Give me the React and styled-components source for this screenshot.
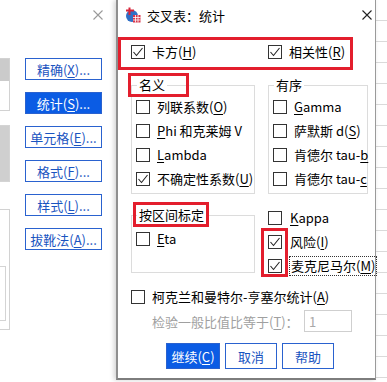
import React from "react";
import styled, { createGlobalStyle } from "styled-components";

const GlobalStyle = createGlobalStyle`
  html, body { margin: 0; padding: 0; background: #fff; }
  body {
    font-family: "Noto Sans CJK SC", "Microsoft YaHei", sans-serif;
    font-size: 13px;
    color: #000;
  }
  #root { width: 387px; height: 382px; overflow: hidden; }
`;

const Screen = styled.div`
  display: flex;
  width: 387px;
  height: 382px;
  overflow: hidden;
  background: #fff;
`;

/* ---------- background window ---------- */
const BackWindow = styled.div`
  width: 116px;
  flex-shrink: 0;
  display: flex;
  flex-direction: column;
  background: #fff;
`;

const BackTitle = styled.div`
  height: 30px;
  display: flex;
  align-items: center;
  justify-content: flex-end;
  padding-right: 13px;
`;

const BackBody = styled.div`
  display: flex;
  padding-top: 28px;
`;

const SideStrip = styled.div`
  width: 10px;
  display: flex;
  flex-direction: column;
`;

const SidePanel = styled.div`
  height: ${(p) => p.$h}px;
  margin-top: ${(p) => p.$mt || 0}px;
  border: 1px solid #d2d2d2;
  border-left: none;
  box-sizing: border-box;
  display: flex;
  flex-direction: column;
`;

const SideFill = styled.div`
  height: ${(p) => p.$h}px;
  margin-top: ${(p) => p.$mt || 0}px;
  width: ${(p) => p.$w || 9}px;
  background: ${(p) => p.$bg || "#cbcbcb"};
  border: ${(p) => (p.$outline ? "1px solid #d4d4d4" : "none")};
  border-left: none;
  box-sizing: border-box;
`;

const ButtonCol = styled.div`
  margin-left: 15px;
  display: flex;
  flex-direction: column;
  gap: 12px;
`;

const SideButton = styled.div`
  width: 77px;
  height: 22px;
  box-sizing: border-box;
  border: 1px solid #2a62cf;
  background: ${(p) => (p.$primary ? "#0b5ce4" : "#fff")};
  color: ${(p) => (p.$primary ? "#fff" : "#1a54bf")};
  display: flex;
  align-items: center;
  justify-content: center;
  font-size: 13px;
  line-height: 1;
  white-space: nowrap;
`;

/* ---------- dialog ---------- */
const Dialog = styled.div`
  position: relative;
  width: 260px;
  height: 380px;
  flex-shrink: 0;
  box-sizing: border-box;
  border-left: 2px solid #8e8e8e;
  border-right: 1px solid #9a9a9a;
  border-bottom: 2px solid #7d7d7d;
  background: #fff;
  box-shadow: -2px 0 5px rgba(0, 0, 0, 0.18);
  display: flex;
  flex-direction: column;
`;

const TitleBar = styled.div`
  height: 30px;
  display: flex;
  align-items: center;
  padding-left: 7px;
  padding-right: 3px;
`;

const TitleText = styled.span`
  margin-left: 6px;
  font-size: 13px;
  line-height: 1;
  flex: 1;
`;

const Content = styled.div`
  display: flex;
  flex-direction: column;
  padding: 6px 0 0 13px;
`;

const TwoCol = styled.div`
  display: grid;
  grid-template-columns: 124px 100px;
  column-gap: 13px;
  align-items: ${(p) => p.$align || "start"};
  margin-top: ${(p) => p.$mt || 0}px;
  height: ${(p) => (p.$h ? `${p.$h}px` : "auto")};
`;

const GroupBox = styled.div`
  border: 1px solid #dcdcdc;
  margin-top: 9px;
  padding: 0 0 ${(p) => p.$pb || 0}px 4px;
  display: flex;
  flex-direction: column;
`;

const Legend = styled.div`
  margin: -10px 0 ${(p) => p.$gap || 2}px 1px;
  padding: 0 2px;
  background: #fff;
  line-height: 17px;
  height: 17px;
  width: fit-content;
  white-space: nowrap;
`;

const Stack = styled.div`
  display: flex;
  flex-direction: column;
`;

const CheckRow = styled.div`
  display: flex;
  align-items: center;
  height: 24px;
  white-space: nowrap;
`;

const Box = styled.span`
  width: 14px;
  height: 14px;
  box-sizing: border-box;
  border: 1px solid #333;
  background: #fff;
  flex-shrink: 0;
  display: inline-flex;
  align-items: center;
  justify-content: center;
`;

const Label = styled.span`
  margin-left: ${(p) => p.$gap || 5}px;
  line-height: 18px;
  padding: 0 1px;
  border: 1px ${(p) => (p.$focus ? "dotted #333" : "solid transparent")};
  color: ${(p) => (p.$disabled ? "#a0a0a0" : "#000")};
`;

const U = styled.span`
  text-decoration: underline;
  text-underline-offset: 2px;
  text-decoration-thickness: 1px;
`;

const TestRow = styled.div`
  display: flex;
  align-items: center;
  height: 22px;
  margin-top: 1px;
  padding-left: 21px;
`;

const TestLabel = styled.span`
  width: 152px;
  color: #a0a0a0;
  white-space: nowrap;
  line-height: 1;
`;

const NumInput = styled.div`
  width: 48px;
  height: 22px;
  box-sizing: border-box;
  border: 1px solid #cfcfcf;
  color: #a8a8a8;
  display: flex;
  align-items: center;
  padding-left: 4px;
  line-height: 1;
`;

const ButtonsRow = styled.div`
  display: flex;
  gap: 5px;
  margin-top: 11px;
  padding-left: 35px;
`;

const DlgButton = styled.div`
  width: ${(p) => p.$w}px;
  height: 26px;
  box-sizing: border-box;
  border: 1px solid #2a62cf;
  background: ${(p) => (p.$primary ? "#0b5ce4" : "#fff")};
  color: ${(p) => (p.$primary ? "#fff" : "#1a54bf")};
  display: flex;
  align-items: center;
  justify-content: center;
  line-height: 1;
  white-space: nowrap;
`;

const RedMark = styled.div`
  position: absolute;
  left: ${(p) => p.$x}px;
  top: ${(p) => p.$y}px;
  width: ${(p) => p.$w}px;
  height: ${(p) => p.$h}px;
  border: 3px solid #e31e2d;
  box-sizing: border-box;
  pointer-events: none;
`;

const SheetEdge = styled.div`
  flex: 1;
  height: 382px;
  background-color: #fff;
  background-image: repeating-linear-gradient(
    to bottom,
    transparent 0,
    transparent 20px,
    #dadada 20px,
    #dadada 21px
  );
`;

/* ---------- pieces ---------- */
const CloseIcon = ({ color }) => (
  <svg width="10" height="10" viewBox="0 0 10 10">
    <path d="M0.5 0.5 L9.5 9.5 M9.5 0.5 L0.5 9.5" stroke={color} strokeWidth="1.1" fill="none" />
  </svg>
);

const AppIcon = () => (
  <svg width="16" height="16" viewBox="0 0 16 16">
    <circle cx="7" cy="9" r="6" fill="#2f6fc6" />
    <rect x="8" y="8" width="7.5" height="7.5" fill="#d8344a" />
    <path d="M8 10.5 H15.5 M8 13 H15.5 M10.5 8 V15.5 M13 8 V15.5" stroke="#fff" strokeWidth="0.8" />
    <path d="M1 3.5 H9 M4.5 0.5 V8" stroke="#d8243a" strokeWidth="2" />
  </svg>
);

const Check = ({ checked, children, gap, focus }) => (
  <CheckRow>
    <Box>
      {checked && (
        <svg width="12" height="12" viewBox="0 0 12 12">
          <polyline points="1.5,6 4.5,9.5 10.5,2" fill="none" stroke="#222" strokeWidth="1.1" />
        </svg>
      )}
    </Box>
    <Label $gap={gap} $focus={focus}>
      {children}
    </Label>
  </CheckRow>
);

export default function App() {
  return (
    <>
      <GlobalStyle />
      <Screen>
        <BackWindow>
          <BackTitle>
            <CloseIcon color="#9a9a9a" />
          </BackTitle>
          <BackBody>
            <SideStrip>
              <SidePanel $h={53}>
                <SideFill $h={22} $w={9} />
              </SidePanel>
              <SideFill $h={57} $mt={14} $w={10} $bg="#cfcfcf" $outline />
              <SidePanel $h={121} $mt={27}>
                <SideFill $h={55} $mt={56} $w={6} $bg="#fff" $outline />
              </SidePanel>
            </SideStrip>
            <ButtonCol>
              <SideButton>
                精确(<U>X</U>)...
              </SideButton>
              <SideButton $primary>
                统计(<U>S</U>)...
              </SideButton>
              <SideButton>
                单元格(<U>E</U>)...
              </SideButton>
              <SideButton>
                格式(<U>F</U>)...
              </SideButton>
              <SideButton>
                样式(<U>L</U>)...
              </SideButton>
              <SideButton>
                拔靴法(<U>A</U>)...
              </SideButton>
            </ButtonCol>
          </BackBody>
        </BackWindow>

        <Dialog>
          <TitleBar>
            <AppIcon />
            <TitleText>交叉表：统计</TitleText>
            <CloseIcon color="#222" />
          </TitleBar>

          <Content>
            <TwoCol $h={32} $align="center">
              <Check checked>
                卡方(<U>H</U>)
              </Check>
              <Check checked>
                相关性(<U>R</U>)
              </Check>
            </TwoCol>

            <TwoCol $mt={8}>
              <GroupBox $pb={2}>
                <Legend>名义</Legend>
                <Check>
                  列联系数(<U>O</U>)
                </Check>
                <Check>
                  <U>P</U>hi 和克莱姆 V
                </Check>
                <Check>
                  <U>L</U>ambda
                </Check>
                <Check checked>
                  不确定性系数(<U>U</U>)
                </Check>
              </GroupBox>
              <GroupBox $pb={2}>
                <Legend>有序</Legend>
                <Check>
                  <U>G</U>amma
                </Check>
                <Check>
                  萨默斯 d(<U>S</U>)
                </Check>
                <Check>
                  肯德尔 tau-<U>b</U>
                </Check>
                <Check>
                  肯德尔 tau-<U>c</U>
                </Check>
              </GroupBox>
            </TwoCol>

            <TwoCol $mt={12}>
              <GroupBox $pb={21}>
                <Legend $gap={4}>按区间标定</Legend>
                <Check>
                  <U>E</U>ta
                </Check>
              </GroupBox>
              <Stack>
                <Check gap={6}>
                  <U>K</U>appa
                </Check>
                <Check checked gap={6}>
                  风险(<U>I</U>)
                </Check>
                <Check checked gap={7} focus>
                  麦克尼马尔(<U>M</U>)
                </Check>
              </Stack>
            </TwoCol>

            <CheckRow style={{ marginTop: 7 }}>
              <Box />
              <Label>
                柯克兰和曼特尔-亨塞尔统计(<U>A</U>)
              </Label>
            </CheckRow>

            <TestRow>
              <TestLabel>
                检验一般比值比等于(<U>T</U>)：
              </TestLabel>
              <NumInput>1</NumInput>
            </TestRow>

            <ButtonsRow>
              <DlgButton $w={54} $primary>
                继续(<U>C</U>)
              </DlgButton>
              <DlgButton $w={52}>取消</DlgButton>
              <DlgButton $w={52}>帮助</DlgButton>
            </ButtonsRow>
          </Content>

          <RedMark $x={0} $y={37} $w={235} $h={33} />
          <RedMark $x={10} $y={73} $w={61} $h={24} />
          <RedMark $x={15} $y={202} $w={76} $h={25} />
          <RedMark $x={143} $y={228} $w={27} $h={49} />
        </Dialog>

        <SheetEdge />
      </Screen>
    </>
  );
}
